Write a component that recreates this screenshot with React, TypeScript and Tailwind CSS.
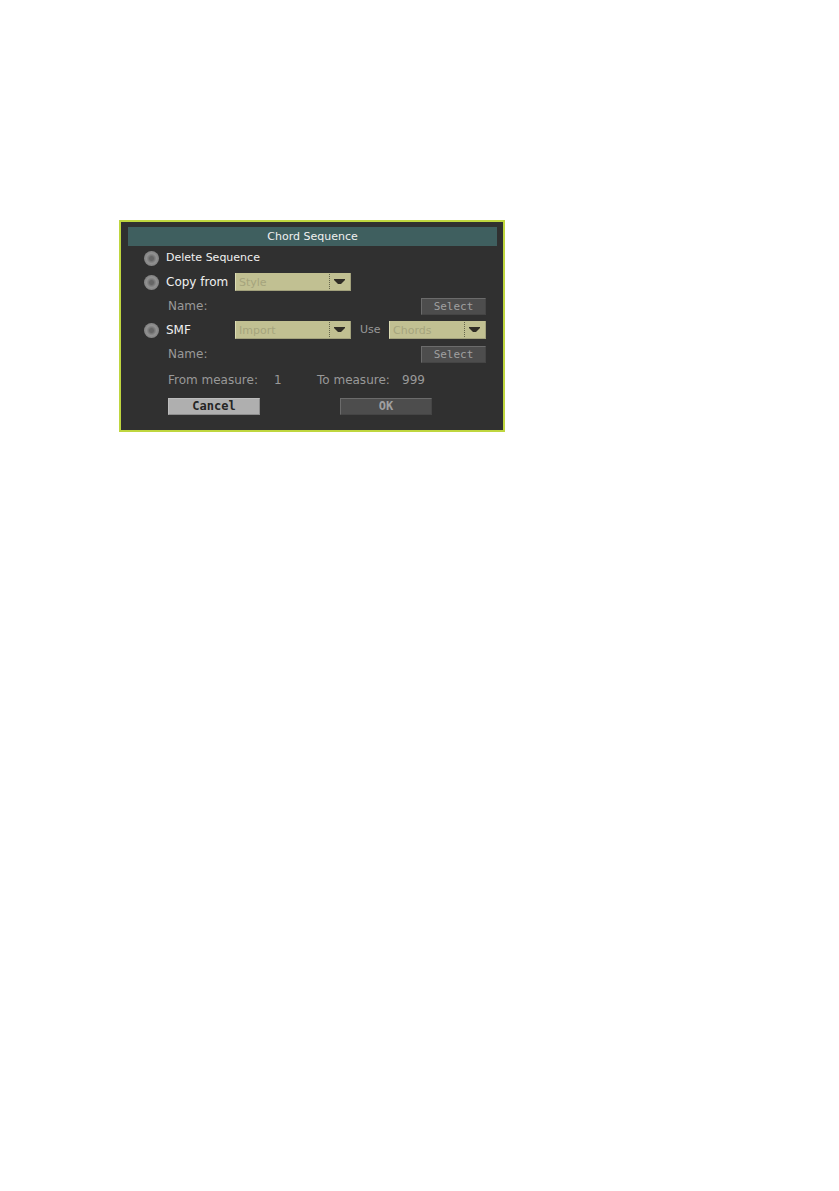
import { useState } from "react";

function Radio({ id, checked, onChange }: { id: string; checked: boolean; onChange: () => void }) {
  return (
    <input
      type="radio"
      id={id}
      name="source"
      checked={checked}
      onChange={onChange}
      className="h-[15px] w-[15px] shrink-0 appearance-none rounded-full bg-[radial-gradient(circle,#666666_0_2px,#777777_3px,#919191_5px,#858585_7px)] checked:bg-[radial-gradient(circle,#d8e04a_0_3px,#919191_5px,#858585_7px)]"
    />
  );
}

function Dropdown({ label, options, className }: { label: string; options: string[]; className: string }) {
  return (
    <div className={`relative h-[18px] ${className}`}>
      <select
        aria-label={label}
        disabled
        className="block h-full w-full appearance-none border-b border-l border-[#dcdcb4] border-b-[#a2a17c] bg-[#c1c092] pt-0.5 pl-[3px] text-[11px] leading-[15px] text-[#a5a47d] opacity-100"
      >
        {options.map((o) => (
          <option key={o}>{o}</option>
        ))}
      </select>
      {/* divider and arrow */}
      <svg viewBox="0 0 22 18" className="pointer-events-none absolute top-0 right-0 h-[18px] w-[22px]">
        <path d="M0.5 1V17" stroke="#65654c" strokeWidth="1" strokeDasharray="1 1" />
        <path d="M21.5 0V18" stroke="#a2a17c" />
        <path d="M5 6H16V7L12 11H9L5 7Z" fill="#302d26" />
      </svg>
    </div>
  );
}

function SelectButton() {
  return (
    <button
      disabled
      className="ml-auto h-[17px] w-[65px] border border-[#6b6b6b] border-r-[#454545] border-b-[#454545] bg-[#4d4d4d] font-['DejaVu_Sans_Mono',monospace] text-[11px] leading-[15px] text-[#a0a0a0]"
    >
      Select
    </button>
  );
}

export default function App() {
  const [source, setSource] = useState("");

  return (
    <main className="min-h-screen bg-white px-[119px] pt-[220px] font-['DejaVu_Sans',sans-serif]">
      <form className="w-full max-w-[386px] border-2 border-[#bfd63f] bg-[#303030] pt-[5px] pr-[6px] pb-[15px] pl-[7px] text-xs text-[#999999]">
        <h1 className="h-[19px] bg-[#3f5f5f] text-center text-[11px] leading-[19px] text-[#f0f0f0]">
          Chord Sequence
        </h1>

        <div className="pr-[11px] pl-4">
          {/* Delete */}
          <div className="flex h-6 items-center gap-[7px]">
            <Radio id="delete" checked={source === "delete"} onChange={() => setSource("delete")} />
            <label htmlFor="delete" className="text-[11px] text-[#f0f0f0]">Delete Sequence</label>
          </div>

          {/* Copy from */}
          <div className="flex h-6 items-center gap-[7px]">
            <Radio id="copy" checked={source === "copy"} onChange={() => setSource("copy")} />
            <label htmlFor="copy" className="w-[62px] whitespace-nowrap text-[#f0f0f0]">Copy from</label>
            <Dropdown label="Copy from" options={["Style"]} className="w-[116px]" />
          </div>
          <div className="flex h-6 items-center pl-6">
            <span>Name:</span>
            <SelectButton />
          </div>

          {/* SMF */}
          <div className="flex h-6 items-center gap-[7px]">
            <Radio id="smf" checked={source === "smf"} onChange={() => setSource("smf")} />
            <label htmlFor="smf" className="w-[62px] text-[#f0f0f0]">SMF</label>
            <Dropdown label="SMF" options={["Import"]} className="w-[116px]" />
            <span className="ml-0.5 text-[11px]">Use</span>
            <Dropdown label="Use" options={["Chords"]} className="ml-auto w-[97px]" />
          </div>
          <div className="flex h-6 items-center pl-6">
            <span>Name:</span>
            <SelectButton />
          </div>

          {/* Measure range */}
          <div className="flex h-7 items-center pl-6 whitespace-nowrap">
            <span className="w-[106px]">From measure:</span>
            <span className="w-[43px]">1</span>
            <span className="w-[85px]">To measure:</span>
            <span>999</span>
          </div>

          <div className="flex gap-20 pt-1 pl-6 font-['DejaVu_Sans_Mono',monospace] text-xs font-bold">
            <button
              type="button"
              className="h-[17px] w-[92px] border border-[#bdbdbd] border-r-[#8c8c8c] border-b-[#8c8c8c] bg-[#afafaf] leading-[15px] text-[#252525]"
            >
              Cancel
            </button>
            <button
              disabled
              className="h-[17px] w-[92px] border border-[#6b6b6b] border-r-[#454545] border-b-[#454545] bg-[#4d4d4d] leading-[15px] text-[#a0a0a0]"
            >
              OK
            </button>
          </div>
        </div>
      </form>
    </main>
  );
}
